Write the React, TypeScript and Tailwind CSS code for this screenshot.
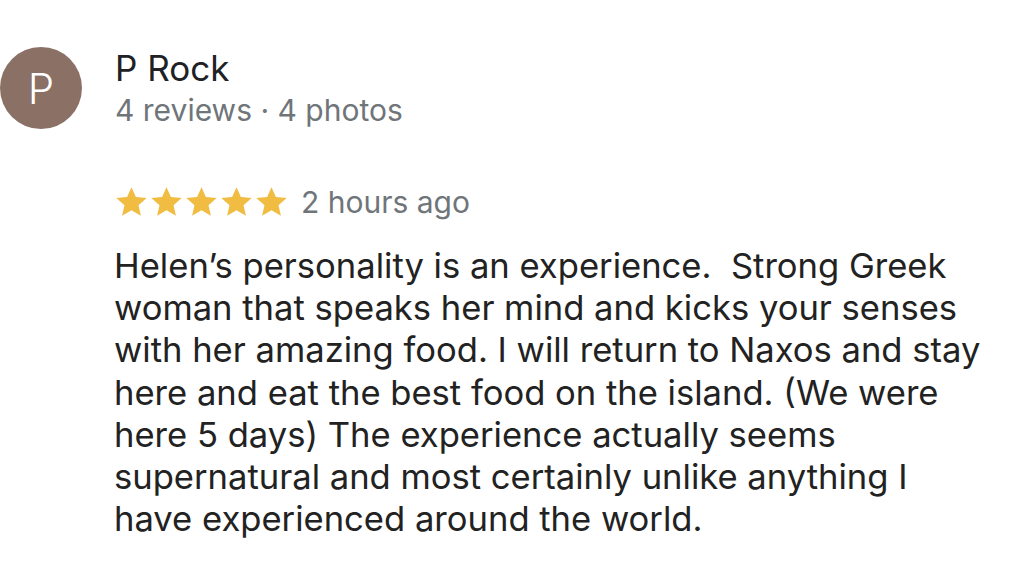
const LINES = [
  'Helen\u2019s personality is an experience.  Strong Greek',
  'woman that speaks her mind and kicks your senses',
  'with her amazing food. I will return to Naxos and stay',
  'here and eat the best food on the island. (We were',
  'here 5 days) The experience actually seems',
  'supernatural and most certainly unlike anything I',
  'have experienced around the world.',
];

function Star() {
  return (
    <svg viewBox="0 0 24 24" className="h-[34px] w-[35px]" fill="#f0bc41">
      <path d="M12 1.5l3.1 7 7.6.72-5.75 5.05 1.7 7.45L12 17.8l-6.65 3.92 1.7-7.45L1.3 9.22l7.6-.72z" />
    </svg>
  );
}

export default function App() {
  return (
    <div className="h-[567px] w-[1024px] bg-white font-['Inter',sans-serif]">
      <div className="flex pt-[47px]">
        <div className="flex h-[82px] w-[82px] shrink-0 items-center justify-center rounded-full bg-[#8b7065] text-[42px] font-light text-white">
          P
        </div>
        <div className="ml-[33px] pt-[1px]">
          <div className="text-[35px] leading-[40px] text-[#202124]">P Rock</div>
          <div className="mt-[3px] text-[30px] leading-[38px] text-[#70757a]">4 reviews · 4 photos</div>
        </div>
      </div>

      <div className="ml-[114px] mt-[53px]">
        <div className="flex items-center">
          <div className="flex">
            {[0, 1, 2, 3, 4].map(i => (
              <Star key={i} />
            ))}
          </div>
          <span className="ml-[12px] text-[30px] leading-[40px] text-[#70757a]">2 hours ago</span>
        </div>
        <div className="mt-[22px] text-[34.6px] leading-[42.2px] text-[#222222]">
          {LINES.map(l => (
            <div key={l} className="whitespace-pre">
              {l}
            </div>
          ))}
        </div>
      </div>
    </div>
  );
}
